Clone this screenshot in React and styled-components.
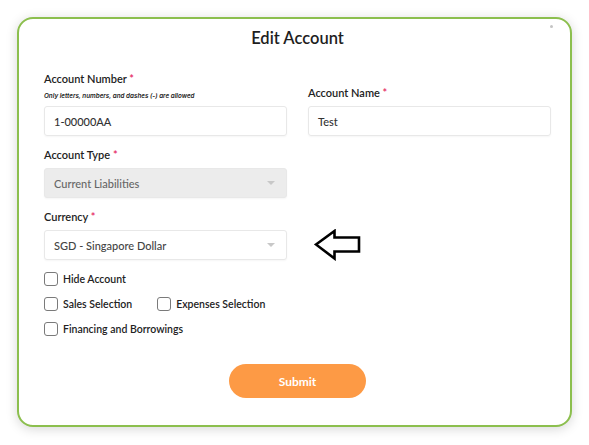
import React from 'react';
import styled, { createGlobalStyle } from 'styled-components';

const GlobalStyle = createGlobalStyle`
  * {
    box-sizing: border-box;
  }
  body {
    margin: 0;
    background: #ffffff;
    font-family: Lato, 'Noto Sans', sans-serif;
    color: #222;
  }
`;

const checks = [
  ['Hide Account'],
  ['Sales Selection', 'Expenses Selection'],
  ['Financing and Borrowings'],
];

const App = () => {
  return (
    <>
      <GlobalStyle />
      <Page>
        <Card>
          <CloseDot />
          <Title>Edit Account</Title>
          <FormGrid>
            <Field>
              <Label>
                Account Number <Star>*</Star>
              </Label>
              <Hint>Only letters, numbers, and dashes (-) are allowed</Hint>
              <Input>1-00000AA</Input>
            </Field>
            <Field $bottom>
              <Label>
                Account Name <Star>*</Star>
              </Label>
              <Input>Test</Input>
            </Field>

            <Field>
              <Label>
                Account Type <Star>*</Star>
              </Label>
              <Select $disabled>
                Current Liabilities
                <Caret />
              </Select>
            </Field>
            <div />

            <Field>
              <Label>
                Currency <Star>*</Star>
              </Label>
              <Select>
                SGD - Singapore Dollar
                <Caret />
              </Select>
            </Field>
            <ArrowCell>
              <svg width="48" height="32" viewBox="0 0 48 32">
                <polygon
                  points="2,15.5 20.5,2 20.5,8.5 45,8.5 45,22.5 20.5,22.5 20.5,29.5"
                  fill="none"
                  stroke="#000"
                  strokeWidth="2.6"
                  strokeLinejoin="miter"
                />
              </svg>
            </ArrowCell>
          </FormGrid>

          <Checks>
            {checks.map((row, i) => (
              <CheckRow key={i}>
                {row.map((label) => (
                  <CheckItem key={label}>
                    <Box />
                    {label}
                  </CheckItem>
                ))}
              </CheckRow>
            ))}
          </Checks>

          <Footer>
            <SubmitButton>Submit</SubmitButton>
          </Footer>
        </Card>
      </Page>
    </>
  );
};

export default App;

const Page = styled.div`
  padding: 17px;
`;

const Card = styled.div`
  position: relative;
  width: 555px;
  height: 410px;
  border: 2px solid #8cbf4e;
  border-radius: 16px;
  background: #fff;
  box-shadow: 0 2px 12px rgba(0, 0, 0, 0.16);
  padding: 9px 19px 27px 25px;
  display: flex;
  flex-direction: column;
`;

const CloseDot = styled.span`
  position: absolute;
  top: 6px;
  right: 17px;
  width: 3px;
  height: 3px;
  border-radius: 50%;
  background: #c4c4c4;
`;

const Title = styled.h1`
  margin: 0 0 24px;
  text-align: center;
  font-size: 16.5px;
  line-height: 20px;
  font-weight: 600;
  color: #1e1e1e;
`;

const FormGrid = styled.div`
  display: grid;
  grid-template-columns: 243px 243px;
  column-gap: 21px;
  row-gap: 12px;
`;

const Field = styled.div`
  display: flex;
  flex-direction: column;
  align-self: ${(p) => (p.$bottom ? 'end' : 'start')};
`;

const Label = styled.div`
  font-size: 11px;
  line-height: 14px;
  font-weight: 600;
  color: #222;
  margin-bottom: 6px;
`;

const Star = styled.span`
  color: #e5265f;
`;

const Hint = styled.div`
  font-family: Inter, 'Noto Sans', sans-serif;
  font-size: 6.3px;
  line-height: 10px;
  font-style: italic;
  font-weight: 600;
  color: #222;
  margin: -1px 0 5px;
`;

const Input = styled.div`
  height: 30px;
  display: flex;
  align-items: center;
  padding: 0 9px;
  border: 1px solid #e8e8e8;
  border-radius: 3px;
  box-shadow: 0 1px 2px rgba(0, 0, 0, 0.04);
  font-size: 11px;
  font-weight: 500;
  color: #333;
`;

const Select = styled(Input)`
  position: relative;
  justify-content: space-between;
  background: ${(p) => (p.$disabled ? '#ececec' : '#fff')};
  color: ${(p) => (p.$disabled ? '#666' : '#444')};
  padding-right: 11px;
`;

const Caret = styled.span`
  width: 0;
  height: 0;
  border-left: 4px solid transparent;
  border-right: 4px solid transparent;
  border-top: 4px solid #c8c8c8;
`;

const ArrowCell = styled.div`
  align-self: end;
  height: 32px;
  margin-left: 6px;
  margin-bottom: -1px;
`;

const Checks = styled.div`
  display: flex;
  flex-direction: column;
  gap: 11px;
  margin-top: 12px;
`;

const CheckRow = styled.div`
  display: flex;
  gap: 25px;
`;

const CheckItem = styled.label`
  display: flex;
  align-items: center;
  gap: 5px;
  height: 14px;
  font-size: 10.5px;
  font-weight: 600;
  color: #222;
`;

const Box = styled.span`
  width: 14px;
  height: 14px;
  border: 1.4px solid #7a7a7a;
  border-radius: 3px;
  background: #fff;
`;

const Footer = styled.div`
  display: flex;
  justify-content: center;
  margin-top: 28px;
`;

const SubmitButton = styled.button`
  width: 137px;
  height: 34px;
  border: none;
  border-radius: 17px;
  background: #fd9a45;
  color: #fff;
  font-family: Lato, 'Noto Sans', sans-serif;
  font-size: 12px;
  font-weight: 700;
  cursor: pointer;
`;
